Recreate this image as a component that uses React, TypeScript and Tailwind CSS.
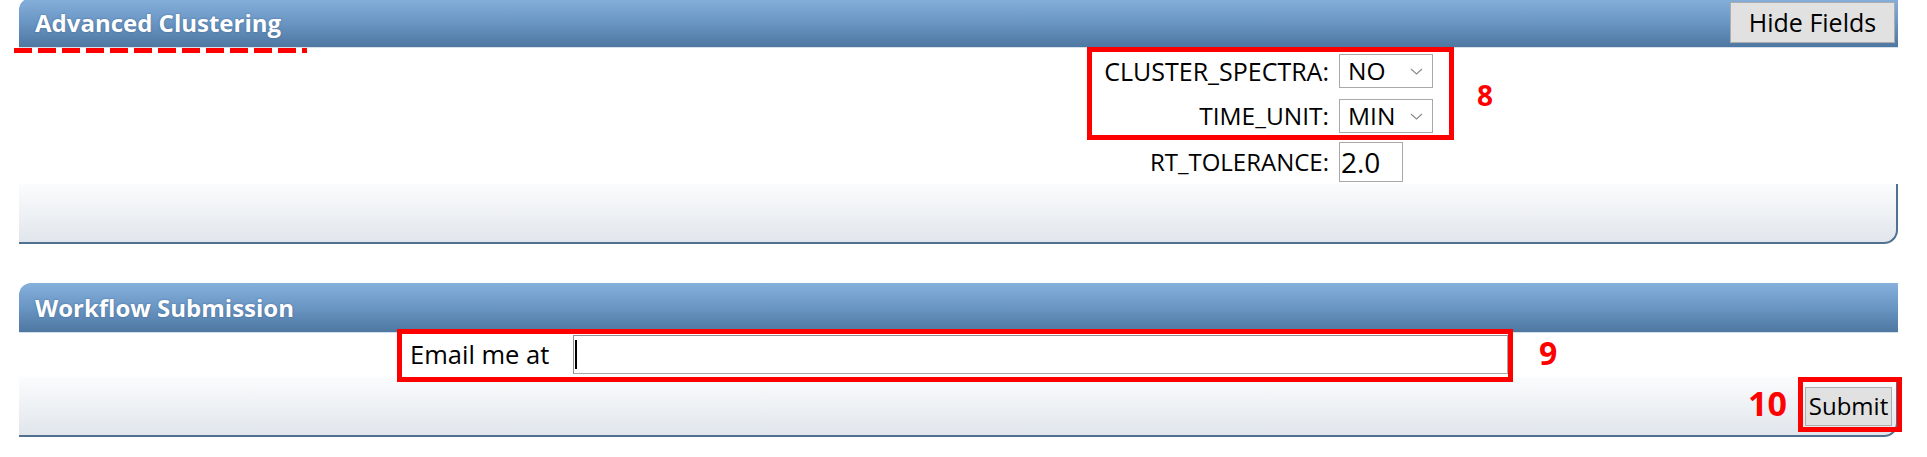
import React from "react";

function Chevron() {
  return (
    <svg width="13" height="7" viewBox="0 0 13 7" className="shrink-0">
      <path d="M1 1 L6.5 6 L12 1" fill="none" stroke="#8a8a8a" strokeWidth="1.1" />
    </svg>
  );
}

function FakeSelect({ value }: { value: string }) {
  return (
    <div className="w-[94px] h-[34px] border border-[#a9a9a9] bg-white flex items-center justify-between pl-[8px] pr-[9px] text-[24.5px] leading-none text-black">
      <span>{value}</span>
      <Chevron />
    </div>
  );
}

function Header({ title, children }: { title: string; children?: React.ReactNode }) {
  return (
    <div className="h-[50px] rounded-tl-[12px] bg-gradient-to-b from-[#86b0dc] via-[#6a96c4] to-[#4e77a1] border-b border-[#d6e0ea] flex items-center justify-between pl-[16px] pr-[3px]">
      <span className="text-white font-bold text-[24px] leading-none [text-shadow:0_0_2px_rgba(40,70,110,0.6)]">
        {title}
      </span>
      {children}
    </div>
  );
}

function Footer({ children }: { children?: React.ReactNode }) {
  return (
    <div className="h-[60px] bg-gradient-to-b from-[#fbfcfd] to-[#e1e6ec] border-b-2 border-r-2 border-[#52708f] rounded-br-[14px] flex items-center justify-end pr-[4px]">
      {children}
    </div>
  );
}

export default function App() {
  return (
    <div
      className="relative w-[1927px] h-[457px] bg-white overflow-hidden text-black"
      style={{ fontFamily: '"Open Sans", "Noto Sans", sans-serif' }}
    >
      <div className="pl-[19px] w-[1898px] -mt-[2px]">
        {/* Panel 1 */}
        <div>
          <Header title="Advanced Clustering">
            <button className="w-[165px] h-[41px] bg-[#e1e1e1] border border-[#adadad] text-[25px] leading-none text-black flex items-center justify-center">
              Hide Fields
            </button>
          </Header>
          <div className="bg-white pt-[6px] pb-[2px] pl-[1070px] flex flex-col">
            <div className="flex items-center h-[34px]">
              <span className="w-[240px] text-right text-[25px] leading-none">CLUSTER_SPECTRA:</span>
              <div className="ml-[10px]">
                <FakeSelect value="NO" />
              </div>
            </div>
            <div className="flex items-center h-[34px] mt-[11px]">
              <span className="w-[240px] text-right text-[24.5px] leading-none">TIME_UNIT:</span>
              <div className="ml-[10px]">
                <FakeSelect value="MIN" />
              </div>
            </div>
            <div className="flex items-center h-[40px] mt-[9px]">
              <span className="w-[240px] text-right text-[24px] leading-none">RT_TOLERANCE:</span>
              <div className="ml-[10px] w-[64px] h-[40px] border border-[#a9a9a9] bg-white flex items-center pl-[1px] text-[28px] leading-none">
                2.0
              </div>
            </div>
          </div>
          <Footer />
        </div>

        {/* Panel 2 */}
        <div className="mt-[39px]">
          <Header title="Workflow Submission" />
          <div className="bg-white pt-[2px] pb-[3px] pl-[391px] flex items-center">
            <span className="w-[163px] text-[25.5px] leading-none">Email me at</span>
            <div className="relative w-[935px] h-[39px] border border-[#a9a9a9] border-t-[#8e8e8e] border-l-[#8e8e8e] bg-white">
              <div className="absolute left-[1px] top-[4px] w-[2px] h-[29px] bg-black" />
            </div>
          </div>
          <Footer>
            <button className="w-[87px] h-[39px] bg-[#e1e1e1] border border-[#adadad] text-[24px] leading-none text-black flex items-center justify-center">
              Submit
            </button>
          </Footer>
        </div>
      </div>

      {/* Annotations */}
      <div className="absolute left-[14px] top-[48px] w-[293px] h-[5px] bg-[repeating-linear-gradient(90deg,#ff0000_0px,#ff0000_18px,transparent_18px,transparent_24px)]" />
      <div className="absolute left-[1087px] top-[47px] w-[367px] h-[93px] border-[5px] border-[#ff0000]" />
      <div className="absolute left-[1477px] top-[81px] text-[28px] font-bold leading-none text-[#ff0000]">8</div>
      <div className="absolute left-[397px] top-[329px] w-[1116px] h-[53px] border-[5px] border-[#ff0000]" />
      <div className="absolute left-[1539px] top-[337px] text-[32px] font-bold leading-none text-[#ff0000]">9</div>
      <div className="absolute left-[1748px] top-[386px] text-[34px] font-bold leading-none text-[#ff0000]">10</div>
      <div className="absolute left-[1798px] top-[377px] w-[104px] h-[55px] border-[5px] border-[#ff0000]" />
    </div>
  );
}
